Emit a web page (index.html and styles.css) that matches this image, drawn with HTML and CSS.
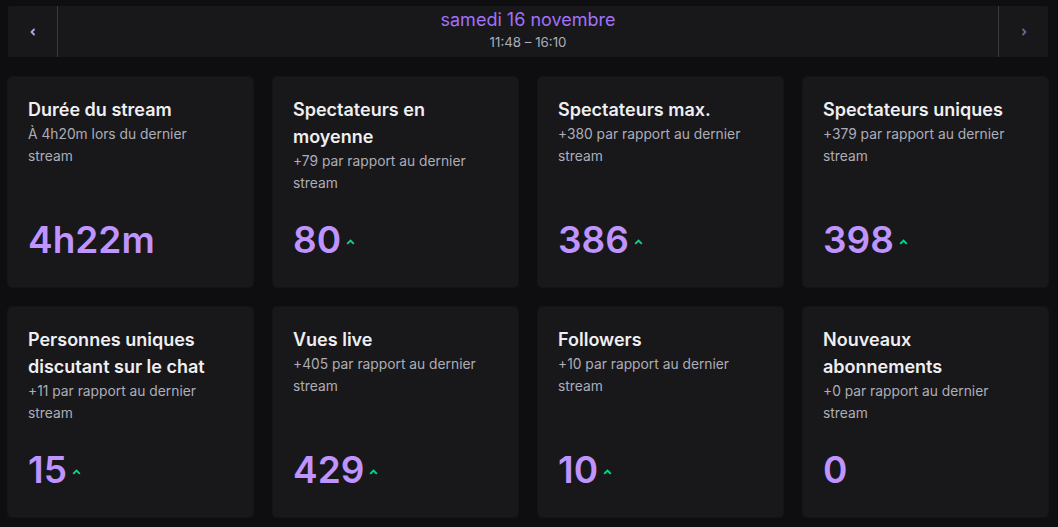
FILE: index.html
```html
<!DOCTYPE html>
<html lang="fr">
<head>
<meta charset="utf-8">
<title>Stream</title>
<link rel="stylesheet" href="styles.css">
</head>
<body>
<div class="page">
  <header class="datebar">
    <button class="nav-btn nav-prev" aria-label="Précédent">
      <svg width="8" height="8" viewBox="0 0 8 8"><path d="M5 1.5 L2.5 4 L5 6.5" fill="none" stroke="currentColor" stroke-width="1.8" stroke-linecap="round" stroke-linejoin="round"/></svg>
    </button>
    <div class="date-info">
      <div class="date-title">samedi 16 novembre</div>
      <div class="date-time">11:48 – 16:10</div>
    </div>
    <button class="nav-btn nav-next" aria-label="Suivant">
      <svg width="8" height="8" viewBox="0 0 8 8"><path d="M3 1.5 L5.5 4 L3 6.5" fill="none" stroke="currentColor" stroke-width="1.8" stroke-linecap="round" stroke-linejoin="round"/></svg>
    </button>
  </header>

  <main class="grid">
    <section class="card">
      <h2 class="card-title">Durée du stream</h2>
      <p class="card-sub">À 4h20m lors du dernier stream</p>
      <div class="card-value"><span class="num">4h22m</span></div>
    </section>
    <section class="card">
      <h2 class="card-title">Spectateurs en moyenne</h2>
      <p class="card-sub">+79 par rapport au dernier stream</p>
      <div class="card-value"><span class="num">80</span><svg class="up" width="9" height="6" viewBox="0 0 9 6"><path d="M1.2 4.8 L4.5 1.5 L7.8 4.8" fill="none" stroke="currentColor" stroke-width="1.9"/></svg></div>
    </section>
    <section class="card">
      <h2 class="card-title">Spectateurs max.</h2>
      <p class="card-sub">+380 par rapport au dernier stream</p>
      <div class="card-value"><span class="num">386</span><svg class="up" width="9" height="6" viewBox="0 0 9 6"><path d="M1.2 4.8 L4.5 1.5 L7.8 4.8" fill="none" stroke="currentColor" stroke-width="1.9"/></svg></div>
    </section>
    <section class="card">
      <h2 class="card-title">Spectateurs uniques</h2>
      <p class="card-sub">+379 par rapport au dernier stream</p>
      <div class="card-value"><span class="num">398</span><svg class="up" width="9" height="6" viewBox="0 0 9 6"><path d="M1.2 4.8 L4.5 1.5 L7.8 4.8" fill="none" stroke="currentColor" stroke-width="1.9"/></svg></div>
    </section>
    <section class="card">
      <h2 class="card-title">Personnes uniques discutant sur le chat</h2>
      <p class="card-sub">+11 par rapport au dernier stream</p>
      <div class="card-value"><span class="num">15</span><svg class="up" width="9" height="6" viewBox="0 0 9 6"><path d="M1.2 4.8 L4.5 1.5 L7.8 4.8" fill="none" stroke="currentColor" stroke-width="1.9"/></svg></div>
    </section>
    <section class="card">
      <h2 class="card-title">Vues live</h2>
      <p class="card-sub">+405 par rapport au dernier stream</p>
      <div class="card-value"><span class="num">429</span><svg class="up" width="9" height="6" viewBox="0 0 9 6"><path d="M1.2 4.8 L4.5 1.5 L7.8 4.8" fill="none" stroke="currentColor" stroke-width="1.9"/></svg></div>
    </section>
    <section class="card">
      <h2 class="card-title">Followers</h2>
      <p class="card-sub">+10 par rapport au dernier stream</p>
      <div class="card-value"><span class="num">10</span><svg class="up" width="9" height="6" viewBox="0 0 9 6"><path d="M1.2 4.8 L4.5 1.5 L7.8 4.8" fill="none" stroke="currentColor" stroke-width="1.9"/></svg></div>
    </section>
    <section class="card">
      <h2 class="card-title">Nouveaux abonnements</h2>
      <p class="card-sub">+0 par rapport au dernier stream</p>
      <div class="card-value"><span class="num">0</span></div>
    </section>
  </main>
</div>
</body>
</html>
```

FILE: styles.css
```css
* { box-sizing: border-box; }

html, body {
  margin: 0;
  padding: 0;
  background: #0e0e10;
  height: 100%;
}

body {
  font-family: Inter, "Noto Sans", "Liberation Sans", sans-serif;
  color: #efeff1;
  overflow: hidden;
}

.page {
  padding: 6px 10px 0 8px;
  display: flex;
  flex-direction: column;
  gap: 20px;
}

.datebar {
  height: 51px;
  background: #18181b;
  border-radius: 2px;
  display: flex;
  align-items: stretch;
}

.nav-btn {
  width: 50px;
  flex: none;
  background: transparent;
  border: none;
  padding: 0;
  display: flex;
  align-items: center;
  justify-content: center;
  cursor: pointer;
}

.nav-prev {
  border-right: 1px solid #3a3a3d;
  color: #b9a2ec;
}

.nav-next {
  border-left: 1px solid #3a3a3d;
  color: #6e5f94;
}

.date-info {
  flex: 1;
  display: flex;
  flex-direction: column;
  align-items: center;
  justify-content: flex-start;
  padding-top: 2px;
}

.date-title {
  font-size: 18px;
  line-height: 24px;
  color: #a370f7;
}

.date-time {
  font-size: 13.3px;
  line-height: 20px;
  color: #adadb8;
}

.grid {
  display: grid;
  grid-template-columns: repeat(4, 1fr);
  grid-auto-rows: 210px;
  gap: 20px;
}

.card {
  background: #18181b;
  border-radius: 4px;
  padding: 19px 20px 24px;
  display: flex;
  flex-direction: column;
  box-shadow: 0 0 0 1px #141416;
}

.card-title {
  margin: 0;
  font-size: 18px;
  line-height: 27px;
  font-weight: 600;
  color: #efeff1;
}

.card-sub {
  margin: 0;
  font-size: 13.8px;
  line-height: 22px;
  color: #adadb8;
}

.card-value {
  margin-top: auto;
  display: flex;
  align-items: center;
  gap: 5px;
}

.num {
  font-size: 37px;
  line-height: 46px;
  font-weight: 600;
  color: #bf94ff;
}

.up {
  color: #00d98b;
  margin-top: 4px;
}
```
